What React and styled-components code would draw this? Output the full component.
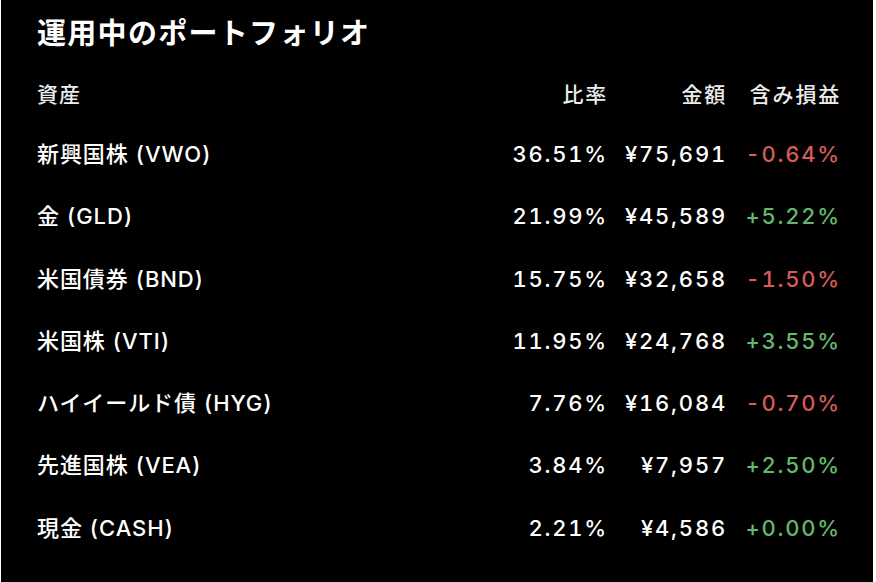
import React from "react";
import styled, { createGlobalStyle } from "styled-components";

const GlobalStyle = createGlobalStyle`
  html, body {
    margin: 0;
    padding: 0;
    background: #ffffff;
  }
  body {
    font-family: "Inter", "Noto Sans CJK JP", sans-serif;
    -webkit-font-smoothing: antialiased;
  }
`;

const Panel = styled.div`
  box-sizing: border-box;
  width: 872px;
  height: 582px;
  margin-left: 1px;
  background: #000000;
  color: #ffffff;
  padding: 15px 32px 0 36px;
`;

const Title = styled.h1`
  margin: 0;
  font-size: 29px;
  font-weight: 700;
  line-height: 38px;
  letter-spacing: 1.3px;
`;

const Table = styled.div`
  display: grid;
  grid-template-columns: 1fr 120px 119px 114px;
  margin-top: 27px;
`;

const Cell = styled.div`
  height: ${(p) => (p.$head ? "59px" : "62.3px")};
  line-height: 30px;
  font-size: ${(p) => (p.$head ? "21px" : "22px")};
  font-weight: 500;
  letter-spacing: ${(p) => (p.$num ? "1.8px" : "0.9px")};
  text-align: ${(p) => (p.$num ? "right" : "left")};
  white-space: nowrap;
  color: ${(p) =>
    p.$tone === "up" ? "#63b96b" : p.$tone === "down" ? "#d65c58" : p.$head ? "#ececec" : "#ffffff"};
  font-variant-numeric: tabular-nums;
`;

const rows = [
  { name: "新興国株 (VWO)", ratio: "36.51%", amount: "¥75,691", pl: "-0.64%" },
  { name: "金 (GLD)", ratio: "21.99%", amount: "¥45,589", pl: "+5.22%" },
  { name: "米国債券 (BND)", ratio: "15.75%", amount: "¥32,658", pl: "-1.50%" },
  { name: "米国株 (VTI)", ratio: "11.95%", amount: "¥24,768", pl: "+3.55%" },
  { name: "ハイイールド債 (HYG)", ratio: "7.76%", amount: "¥16,084", pl: "-0.70%" },
  { name: "先進国株 (VEA)", ratio: "3.84%", amount: "¥7,957", pl: "+2.50%" },
  { name: "現金 (CASH)", ratio: "2.21%", amount: "¥4,586", pl: "+0.00%" },
];

const App = () => {
  return (
    <>
      <GlobalStyle />
      <Panel>
        <Title>運用中のポートフォリオ</Title>
        <Table>
          <Cell $head>資産</Cell>
          <Cell $head $num>比率</Cell>
          <Cell $head $num>金額</Cell>
          <Cell $head $num>含み損益</Cell>
          {rows.map((r) => (
            <React.Fragment key={r.name}>
              <Cell>{r.name}</Cell>
              <Cell $num>{r.ratio}</Cell>
              <Cell $num>{r.amount}</Cell>
              <Cell $num $tone={r.pl.startsWith("-") ? "down" : "up"}>
                {r.pl}
              </Cell>
            </React.Fragment>
          ))}
        </Table>
      </Panel>
    </>
  );
};

export default App;
